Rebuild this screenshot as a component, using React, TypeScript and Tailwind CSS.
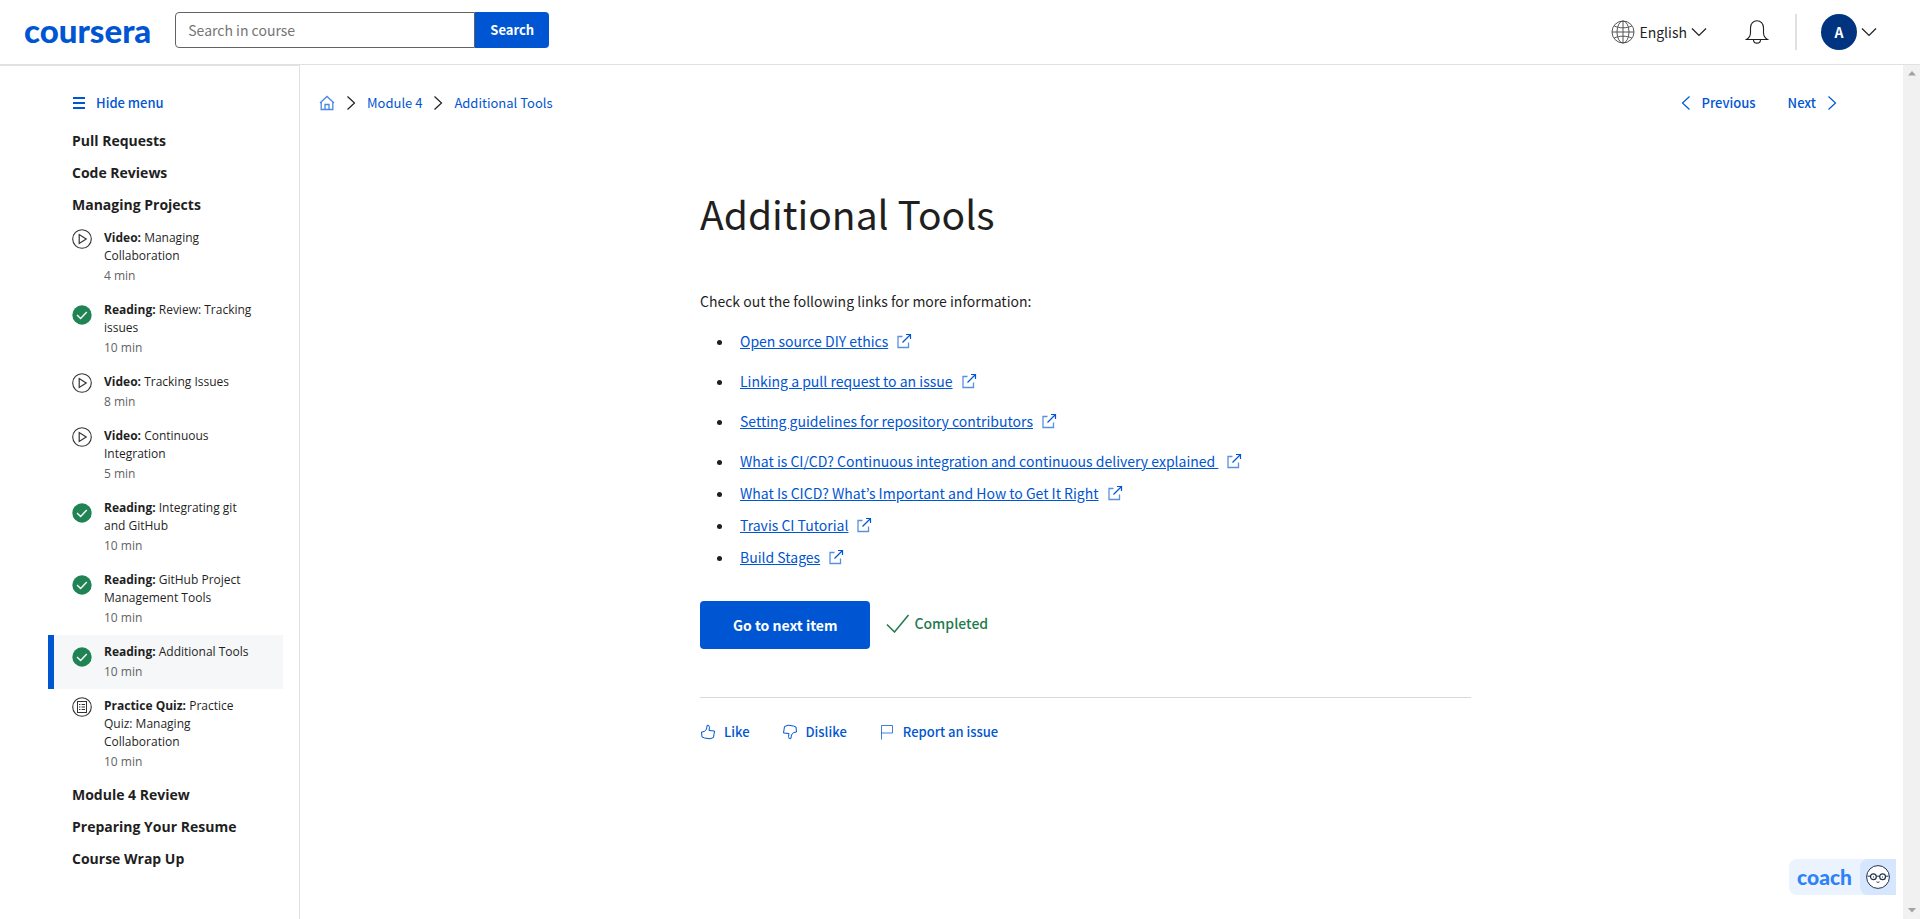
import React from "react";

const main = "font-['Noto_Sans_CJK_KR',sans-serif]";

type Kind = "video" | "done" | "quiz";
type Item = { kind: Kind; type: string; title: string; time: string; active?: boolean };

const items: Item[] = [
  { kind: "video", type: "Video:", title: "Managing Collaboration", time: "4 min" },
  { kind: "done", type: "Reading:", title: "Review: Tracking issues", time: "10 min" },
  { kind: "video", type: "Video:", title: "Tracking Issues", time: "8 min" },
  { kind: "video", type: "Video:", title: "Continuous Integration", time: "5 min" },
  { kind: "done", type: "Reading:", title: "Integrating git and GitHub", time: "10 min" },
  { kind: "done", type: "Reading:", title: "GitHub Project Management Tools", time: "10 min" },
  { kind: "done", type: "Reading:", title: "Additional Tools", time: "10 min", active: true },
  { kind: "quiz", type: "Practice Quiz:", title: "Practice Quiz: Managing Collaboration", time: "10 min" },
];

const links = [
  { text: "Open source DIY ethics", roomy: true },
  { text: "Linking a pull request to an issue", roomy: true },
  { text: "Setting guidelines for repository contributors", roomy: true },
  { text: "What is CI/CD? Continuous integration and continuous delivery explained\u00a0", roomy: false },
  { text: "What Is CICD? What’s Important and How to Get It Right", roomy: false },
  { text: "Travis CI Tutorial", roomy: false },
  { text: "Build Stages", roomy: false },
];

function Chevron({ dir, className }: { dir: "left" | "right" | "down"; className: string }) {
  const d = { left: "M11.5 1.5 4.5 8l7 6.5", right: "M4.5 1.5l7 6.5-7 6.5", down: "M1 4.5 8 11.5l7-7" }[dir];
  return (
    <svg viewBox="0 0 16 16" className={className} fill="none" stroke="currentColor" strokeWidth="1.2" aria-hidden="true">
      <path d={d} />
    </svg>
  );
}

function ItemIcon({ kind }: { kind: Kind }) {
  if (kind === "done")
    return (
      <svg viewBox="0 0 20 20" className="mt-1 size-5 shrink-0" aria-hidden="true">
        <circle cx="10" cy="10" r="9.7" fill="#1f8354" />
        <path d="M5 10l3.6 3.4 6.2-6.4" fill="none" stroke="#fff" strokeWidth="1.4" />
      </svg>
    );
  return (
    <svg viewBox="0 0 20 20" className="size-5 shrink-0" fill="none" stroke="#333" aria-hidden="true">
      <circle cx="10" cy="10" r="9.3" strokeWidth="1.1" />
      {kind === "video" ? (
        <path d="M7.2 5.5v9l7-4.5z" strokeWidth="1.2" />
      ) : (
        <>
          <rect x="5.5" y="4.5" width="9" height="11" strokeWidth="1" />
          <path d="M7 7.5h1.4M7 10h1.4M7 12.5h1.4M9.6 7.5h3.4M9.6 10h3.4M9.6 12.5h3.4" strokeWidth="1" />
        </>
      )}
    </svg>
  );
}

function ExternalIcon() {
  return (
    <svg viewBox="0 0 16 16" className="size-4 shrink-0" fill="none" stroke="#0056d2" aria-hidden="true">
      <path d="M6.5 3.500h-4.500v11h10.500V9.500" strokeOpacity=".65" strokeWidth="1.3" />
      <path d="M6.5 9.5l8-8M10 1.5h4.5V6" strokeWidth="1.2" />
    </svg>
  );
}

function Section({ title }: { title: string }) {
  return (
    <h2 className="pl-6 text-sm leading-8 font-bold">
      <a href="#section">{title}</a>
    </h2>
  );
}

function Header() {
  return (
    <header className="flex h-[65px] shrink-0 items-center justify-between border-b border-[#e1e1e1] pr-[43px] pl-6">
      <div className="flex items-center gap-6 pb-1">
        <a href="#home" className="font-[Lato,sans-serif] text-[33px] leading-9 font-black text-[#0056d2]">coursera</a>
        <form className="flex h-9" onSubmit={(e) => e.preventDefault()}>
          <input
            aria-label="Search in course"
            placeholder="Search in course"
            className="w-[300px] rounded-l border border-[#636363] px-3 text-sm outline-none placeholder:text-[#757575]"
          />
          <button className="rounded-r bg-[#0056d2] px-[15px] text-[13px] font-bold text-white">Search</button>
        </form>
      </div>
      <div className="flex h-9 items-center">
        <button className="flex items-center gap-1">
          <svg viewBox="0 0 24 24" className="size-6" fill="none" stroke="#555" strokeWidth="1" aria-hidden="true">
            <circle cx="12" cy="12" r="11" />
            <ellipse cx="12" cy="12" rx="6" ry="11" />
            <path d="M12 1v22M1 12h22M3.2 6c5 2.4 12.600 2.400 17.600 0M3.200 18c5-2.400 12.600-2.400 17.600 0" />
          </svg>
          <span className="text-sm">English</span>
          <Chevron dir="down" className="size-4" />
        </button>
        <button aria-label="Notifications" className="ml-[38px]">
          <svg viewBox="0 0 24 24" className="size-6" fill="none" stroke="#1f1f1f" strokeWidth="1.1" aria-hidden="true">
            <path d="M1.500 19.500c2.500-1.500 4-3.500 4-7V8C5.500 3.500 8.500.8 12 .8S18.500 3.500 18.500 8v4.500c0 3.500 1.500 5.500 4 7zM8.500 19.700c0 4.600 7 4.600 7 0" />
          </svg>
        </button>
        <span className="ml-[26px] h-9 w-0.5 bg-[#e1e1e1]" />
        <button aria-label="Account" className="ml-6 flex items-center gap-1">
          <span className="flex size-9 items-center justify-center rounded-full bg-[#003380] text-sm font-bold text-white">A</span>
          <Chevron dir="down" className="size-4" />
        </button>
      </div>
    </header>
  );
}

function Sidebar() {
  return (
    <aside className="w-[300px] shrink-0 border-t border-r border-[#e1e1e1] pl-12 font-['Open_Sans',sans-serif]">
      <button className={`flex items-center gap-2.5 pt-[23px] pl-6 text-[13px] leading-7 font-medium text-[#0056d2] ${main}`}>
        <svg viewBox="0 0 14 14" className="size-3.5" stroke="currentColor" strokeWidth="2" aria-hidden="true">
          <path d="M1 2h12M1 7h12M1 12h12" />
        </svg>
        Hide menu
      </button>
      <nav aria-label="Course" className="mt-2 mr-4">
        <Section title="Pull Requests" />
        <Section title="Code Reviews" />
        <Section title="Managing Projects" />
        {items.map((it) => (
          <a
            key={it.title}
            href="#item"
            className={`flex gap-3 border-l-[6px] py-2 pr-6 pl-[18px] text-xs leading-[18px] ${it.active ? "border-[#0056d2] bg-[#f5f7f8]" : "border-transparent"}`}
          >
            <ItemIcon kind={it.kind} />
            <span>
              <span className="block">
                <b className="font-bold">{it.type}</b> {it.title}
              </span>
              <span className="mt-0.5 block text-[#636363]">{it.time}</span>
            </span>
          </a>
        ))}
        <Section title="Module 4 Review" />
        <Section title="Preparing Your Resume" />
        <Section title="Course Wrap Up" />
      </nav>
    </aside>
  );
}

function TopNav() {
  return (
    <div className="flex items-center justify-between pt-6 pr-[63px] pl-[19px] text-[13px] leading-7 text-[#0056d2]">
      <nav aria-label="Breadcrumb" className="flex items-center gap-2">
        <a href="#home" aria-label="Home">
          <svg viewBox="0 0 16 16" className="size-4" fill="none" stroke="#0056d2" strokeOpacity=".7" strokeWidth="1.300" aria-hidden="true">
            <path d="M1 8 8 1.500 15 8M2.200 7v7.500h11.600V7M6 14.500v-5h4v5" />
          </svg>
        </a>
        <Chevron dir="right" className="size-4 text-[#1f1f1f]" />
        <a href="#module">Module 4</a>
        <Chevron dir="right" className="size-4 text-[#1f1f1f]" />
        <a href="#tools">Additional Tools</a>
      </nav>
      <div className="flex items-center gap-8 font-medium">
        <a href="#previous" className="flex items-center gap-2">
          <Chevron dir="left" className="size-4" />
          Previous
        </a>
        <a href="#next" className="flex items-center gap-2">
          Next
          <Chevron dir="right" className="size-4" />
        </a>
      </div>
    </div>
  );
}

function Article() {
  return (
    <div className="pr-8">
      <article className="mx-auto mt-[66px] w-full max-w-[771px]">
        <h1 className="text-[39px] leading-[60px]">Additional Tools</h1>
        <p className="mt-[46px] text-sm leading-6">Check out the following links for more information:</p>
        <ul className="mt-4 list-disc pl-[34px] text-sm leading-6">
          {links.map((l) => (
            <li key={l.text} className={l.roomy ? "mb-4 pl-1.5" : "mb-2 pl-1.5"}>
              <span className="inline-flex items-center gap-2">
                <a href="#link" className="text-[#0056d2] underline">{l.text}</a>
                <ExternalIcon />
              </span>
            </li>
          ))}
        </ul>
        <div className="mt-8 flex items-center gap-4">
          <button className="h-12 rounded bg-[#0056d2] px-[33px] text-sm font-bold text-white">Go to next item</button>
          <span className="flex items-center gap-1 pb-1 text-sm font-medium text-[#1f7a4d]">
            <svg viewBox="0 0 24 20" className="h-5 w-6" fill="none" stroke="currentColor" strokeWidth="1.500" aria-hidden="true">
              <path d="M1 11.500 8.500 19 22.500 2" />
            </svg>
            Completed
          </span>
        </div>
        <div className="mt-12 flex gap-8 border-t border-[#d9d9d9] pt-5 text-[13px] leading-7 font-medium text-[#0056d2]">
          <button className="flex items-center gap-2">
            <svg viewBox="0 0 16 16" className="size-4" fill="none" stroke="currentColor" strokeLinejoin="round" aria-hidden="true">
              <path d="M1.500 8 4.500 7.500 6.500 5 7.200 1.200 8.800 1.500 9.500 3.500 9 6.500 14.500 7 13.500 13.500 10 14.800 4.500 14 2 13z" />
            </svg>
            Like
          </button>
          <button className="flex items-center gap-2">
            <svg viewBox="0 0 16 16" className="size-4" fill="none" stroke="currentColor" strokeLinejoin="round" aria-hidden="true">
              <path d="M14.500 8 11.500 8.500 9.500 11 8.800 14.800 7.200 14.500 6.500 12.500 7 9.500 1.500 9 2.500 2.500 6 1.200 11.500 2 14 3z" />
            </svg>
            Dislike
          </button>
          <button className="flex items-center gap-2">
            <svg viewBox="0 0 16 16" className="size-4" fill="none" stroke="currentColor" strokeOpacity=".75" aria-hidden="true">
              <path d="M2.500 15.500v-14h11v7.500h-11" />
            </svg>
            Report an issue
          </button>
        </div>
      </article>
    </div>
  );
}

export default function App() {
  return (
    <div className={`relative flex min-h-screen flex-col bg-white text-[#1f1f1f] ${main}`}>
      <Header />
      <div className="flex flex-1">
        <Sidebar />
        <main className="min-w-0 flex-1">
          <TopNav />
          <Article />
        </main>
        <div aria-hidden="true" className="flex w-[17px] shrink-0 flex-col items-center justify-between bg-[#f1f1f1] py-1.5">
          <svg viewBox="0 0 8 5" className="h-[5px] w-2" fill="#a3a3a3"><path d="M4 0l4 4.500H0z" /></svg>
          <svg viewBox="0 0 8 5" className="h-[5px] w-2" fill="#a3a3a3"><path d="M4 4.500L8 0H0z" /></svg>
        </div>
      </div>
      <button className="fixed right-6 bottom-6 flex h-9 items-center rounded-l-lg bg-[#ebf3ff] pl-2 font-[Lato,sans-serif] text-[21px] font-black text-[#2d82f7]">
        coach
        <span className="ml-2 flex size-9 items-center justify-center rounded-l-lg bg-[#d6e6ff]">
          <svg viewBox="0 0 24 24" className="size-6" fill="none" stroke="#22304a" aria-hidden="true">
            <circle cx="12" cy="12" r="11.400" fill="#fff" strokeWidth="1" />
            <circle cx="7.400" cy="11.800" r="2.900" strokeWidth="1.200" />
            <circle cx="16.600" cy="11.800" r="2.900" strokeWidth="1.200" />
            <path d="M1.500 11.200h3M19.500 11.200h3M10.200 11.200h3.600M10.500 16.800c.8.700 2.200.700 3 0M7 12h1M16 12h1" />
          </svg>
        </span>
      </button>
    </div>
  );
}
